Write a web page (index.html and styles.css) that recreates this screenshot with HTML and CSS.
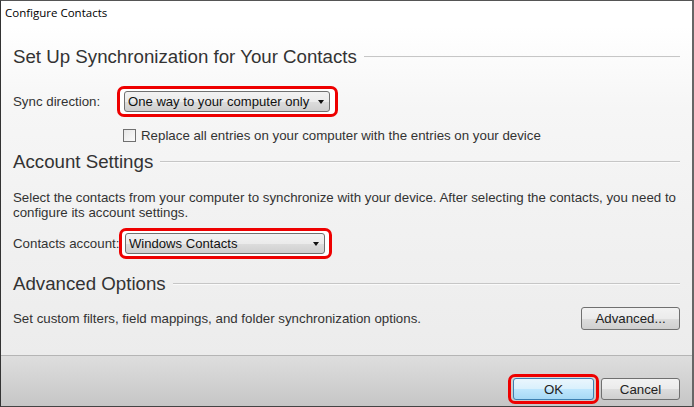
FILE: index.html
```html
<!DOCTYPE html>
<html>
<head>
<meta charset="utf-8">
<link rel="stylesheet" href="styles.css">
</head>
<body>
<div class="window">
  <div class="titlebar">Configure Contacts</div>
  <div class="content">
    <div class="heading h1"><span>Set Up Synchronization for Your Contacts</span><i class="rule"></i></div>
    <div class="row row-sync">
      <span class="label">Sync direction:</span>
      <div class="hl hl-sync">
        <div class="select sel-sync"><span>One way to your computer only</span><i class="arrow"></i></div>
      </div>
    </div>
    <div class="row row-check">
      <span class="checkbox"></span>
      <span class="check-label">Replace all entries on your computer with the entries on your device</span>
    </div>
    <div class="heading h2"><span>Account Settings</span><i class="rule"></i></div>
    <p class="para">Select the contacts from your computer to synchronize with your device. After selecting the contacts, you need to configure its account settings.</p>
    <div class="row row-account">
      <span class="label">Contacts account:</span>
      <div class="hl hl-account">
        <div class="select sel-account"><span>Windows Contacts</span><i class="arrow"></i></div>
      </div>
    </div>
    <div class="heading h3"><span>Advanced Options</span><i class="rule"></i></div>
    <div class="row row-adv">
      <span class="adv-text">Set custom filters, field mappings, and folder synchronization options.</span>
      <div class="btn btn-adv">Advanced...</div>
    </div>
  </div>
  <div class="footer">
    <div class="hl hl-ok"><div class="btn btn-ok">OK</div></div>
    <div class="btn btn-cancel">Cancel</div>
  </div>
</div>
</body>
</html>
```
FILE: styles.css
```css
html, body {
  margin: 0;
  padding: 0;
  background: #ffffff;
}
.window {
  width: 694px;
  height: 407px;
  box-sizing: border-box;
  border-top: 1px solid #555;
  border-left: 1px solid #333;
  border-right: 2px solid #666;
  border-bottom: 1px solid #444;
  display: flex;
  flex-direction: column;
  font-family: "Liberation Sans", Arial, sans-serif;
  color: #333;
  overflow: hidden;
}
.titlebar {
  height: 25px;
  flex: none;
  background: #fff;
  font-family: "Open Sans", "Liberation Sans", sans-serif;
  font-size: 11.5px;
  line-height: 24px;
  color: #000;
  padding-left: 4px;
}
.content {
  height: 329px;
  flex: none;
  box-sizing: border-box;
  padding: 19px 12px 0 12px;
  background: linear-gradient(to bottom, #ffffff 0%, #f6f6f6 25%, #ececec 100%);
  display: flex;
  flex-direction: column;
}
.heading {
  display: flex;
  align-items: center;
  height: 24px;
  font-size: 18.7px;
  color: #333;
  white-space: nowrap;
}
.rule {
  flex: 1;
  height: 0;
  border-top: 1px solid #c6c6c6;
  border-bottom: 1px solid #fafafa;
  margin-left: 7px;
  margin-right: 0;
}
.h2 { margin-top: 7px; }
.h3 { margin-top: 13px; }
.row {
  display: flex;
  align-items: center;
  font-size: 13.3px;
}
.row-sync { margin-top: 17px; height: 31px; }
.label {
  width: 104px;
  flex: none;
  white-space: nowrap;
}
.row-account .label { width: 106px; }
.hl {
  border: 3px solid #ee0000;
  border-radius: 7px;
  box-sizing: border-box;
  display: flex;
  align-items: center;
  background: #fff;
}
.hl-sync {
  width: 221px;
  height: 31px;
  padding-left: 4px;
}
.hl-account {
  width: 213px;
  height: 31px;
  padding-left: 3px;
  position: relative;
  z-index: 1;
}
.select {
  height: 21px;
  box-sizing: border-box;
  border: 1px solid #707070;
  border-radius: 3px;
  background: linear-gradient(to bottom, #f2f2f2 0%, #ebebeb 50%, #dddddd 51%, #cfcfcf 100%);
  display: flex;
  align-items: center;
  padding-left: 3px;
  padding-right: 5px;
  font-size: 13.1px;
  color: #111;
}
.select span { flex: 1; white-space: nowrap; overflow: hidden; }
.sel-sync { width: 206px; }
.sel-account { width: 200px; }
.arrow {
  flex: none;
  width: 0;
  height: 0;
  margin-left: 4px;
  border-left: 3.5px solid transparent;
  border-right: 3.5px solid transparent;
  border-top: 4px solid #111;
}
.row-check {
  margin-top: 10px;
  height: 16px;
  padding-left: 110px;
}
.checkbox {
  width: 11px;
  height: 11px;
  border: 1px solid #707070;
  background: linear-gradient(135deg, #e6e6e6, #fbfbfb);
  margin-right: 5px;
  flex: none;
}
.check-label { white-space: nowrap; }
.para {
  margin: 16px 0 0 0;
  font-size: 13.3px;
  line-height: 15px;
  padding-right: 2px;
}
.row-account { margin-top: 8px; height: 31px; }
.row-adv {
  margin-top: 11px;
  height: 23px;
  justify-content: space-between;
}
.btn {
  box-sizing: border-box;
  border: 1px solid #707070;
  border-radius: 3px;
  background: linear-gradient(to bottom, #f2f2f2 0%, #ebebeb 50%, #dddddd 51%, #cfcfcf 100%);
  display: flex;
  align-items: center;
  justify-content: center;
  font-size: 13.3px;
  color: #222;
}
.btn-adv { width: 99px; height: 23px; }
.footer {
  flex: 1;
  border-top: 1px solid #b5b5b5;
  background: linear-gradient(to bottom, #dedede 0%, #d2d2d2 50%, #c6c6c6 100%);
  display: flex;
  justify-content: flex-end;
  align-items: flex-start;
  padding: 18px 12px 0 0;
}
.hl-ok {
  width: 91px;
  height: 30px;
  padding: 1px 2px;
  background: transparent;
  margin-right: 2px;
}
.btn-ok {
  width: 81px;
  height: 22px;
  border-color: #3c7fb1;
  background: linear-gradient(to bottom, #eaf6fd 0%, #d9f0fc 50%, #bee6fd 51%, #a7d9f5 100%);
}
.btn-cancel {
  width: 79px;
  height: 22px;
  margin-top: 4px;
}
```
